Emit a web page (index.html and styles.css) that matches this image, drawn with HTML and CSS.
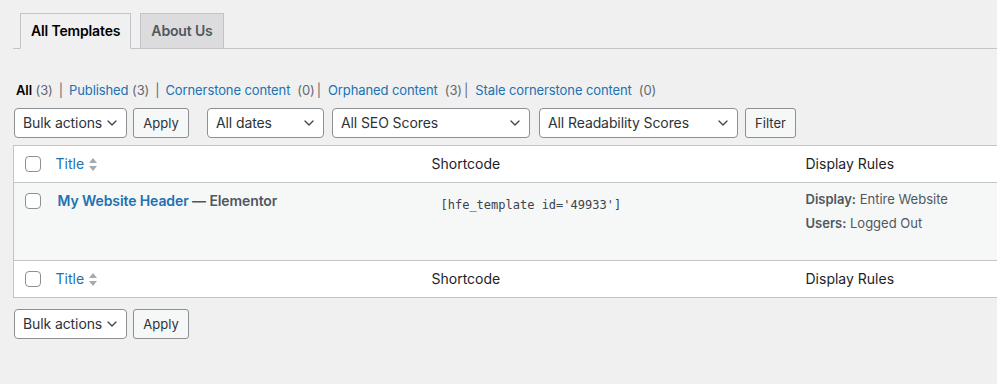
FILE: index.html
```html
<!DOCTYPE html>
<html lang="en">
<head>
<meta charset="utf-8">
<title>All Templates</title>
<link rel="stylesheet" href="styles.css">
</head>
<body>
<div class="wrap">
  <nav class="tabs">
    <a class="tab active" href="#">All Templates</a>
    <a class="tab" href="#">About Us</a>
  </nav>

  <ul class="subsubsub">
    <li><a class="current" href="#">All</a> <span class="count">(3)</span><span class="sep">|</span></li>
    <li><a href="#">Published</a> <span class="count">(3)</span><span class="sep">|</span></li>
    <li><a href="#">Cornerstone content</a><span class="count gap">(0)</span><span class="sep tight">|</span></li>
    <li><a href="#">Orphaned content</a><span class="count gap">(3)</span><span class="sep tight">|</span></li>
    <li><a href="#">Stale cornerstone content</a><span class="count gap">(0)</span></li>
  </ul>

  <div class="tablenav top">
    <div class="select w-bulk"><span>Bulk actions</span><svg viewBox="0 0 10 6" width="10" height="6"><path d="M1 1l4 4 4-4" /></svg></div>
    <button class="button w-apply">Apply</button>
    <div class="select w-dates ml-18"><span>All dates</span><svg viewBox="0 0 10 6" width="10" height="6"><path d="M1 1l4 4 4-4" /></svg></div>
    <div class="select w-seo ml-8"><span>All SEO Scores</span><svg viewBox="0 0 10 6" width="10" height="6"><path d="M1 1l4 4 4-4" /></svg></div>
    <div class="select w-read ml-9"><span>All Readability Scores</span><svg viewBox="0 0 10 6" width="10" height="6"><path d="M1 1l4 4 4-4" /></svg></div>
    <button class="button w-filter ml-7">Filter</button>
  </div>

  <table class="widefat">
    <colgroup>
      <col class="c-check">
      <col class="c-title">
      <col class="c-code">
      <col class="c-rules">
    </colgroup>
    <thead>
      <tr>
        <td class="check"><span class="cb"></span></td>
        <th><a class="sort" href="#">Title <svg class="arrows" viewBox="0 0 8 13" width="8" height="13"><path d="M4 0l4 5H0z"/><path d="M0 8h8l-4 5z"/></svg></a></th>
        <th>Shortcode</th>
        <th>Display Rules</th>
      </tr>
    </thead>
    <tbody>
      <tr class="odd">
        <td class="check"><span class="cb"></span></td>
        <td class="title-cell"><strong><a class="row-title" href="#">My Website Header</a> <span class="state">— Elementor</span></strong></td>
        <td class="code-cell"><code>[hfe_template id='49933']</code></td>
        <td class="rules-cell">
          <div class="rule"><b>Display:</b> Entire Website</div>
          <div class="rule"><b>Users:</b> Logged Out</div>
        </td>
      </tr>
    </tbody>
    <tfoot>
      <tr>
        <td class="check"><span class="cb"></span></td>
        <th><a class="sort" href="#">Title <svg class="arrows" viewBox="0 0 8 13" width="8" height="13"><path d="M4 0l4 5H0z"/><path d="M0 8h8l-4 5z"/></svg></a></th>
        <th>Shortcode</th>
        <th>Display Rules</th>
      </tr>
    </tfoot>
  </table>

  <div class="tablenav bottom">
    <div class="select w-bulk"><span>Bulk actions</span><svg viewBox="0 0 10 6" width="10" height="6"><path d="M1 1l4 4 4-4" /></svg></div>
    <button class="button w-apply">Apply</button>
  </div>
</div>
</body>
</html>
```

FILE: styles.css
```css
html, body {
  margin: 0;
  padding: 0;
  overflow: hidden;
}
body {
  background: #f0f0f1;
  color: #3c434a;
  font-family: Inter, "Noto Sans", "Liberation Sans", sans-serif;
  font-size: 13px;
  line-height: 1.4em;
}
a { text-decoration: none; color: #2271b1; }

.wrap {
  padding: 13px 0 0 13px;
  width: 1200px;
}

/* tabs */
.tabs {
  display: flex;
  border-bottom: 1px solid #c3c4c7;
  padding-left: 7px;
  gap: 9px;
  height: 35px;
  align-items: flex-end;
  width: 984px;
}
.tab {
  display: block;
  box-sizing: border-box;
  height: 36px;
  margin-bottom: -1px;
  padding: 0 10px;
  border: 1px solid #c3c4c7;
  background: #dcdcde;
  color: #50575e;
  font-size: 14px;
  font-weight: 600;
  line-height: 34px;
  letter-spacing: -0.15px;
}
.tab.active {
  background: #f0f0f1;
  color: #000;
  border-bottom-color: #f0f0f1;
}

/* status links */
.subsubsub {
  list-style: none;
  margin: 28px 0 0 3px;
  padding: 0;
  display: flex;
  font-size: 13px;
  line-height: 26px;
  color: #646970;
  height: 26px;
  letter-spacing: -0.1px;
}
.subsubsub li { white-space: pre; }
.subsubsub .current { color: #000; font-weight: 600; }
.subsubsub .sep { padding: 0 6px 0 6px; color: #646970; }
.subsubsub .sep.tight { padding: 0 7px 0 2px; }
.subsubsub .gap { margin-left: 7px; }

/* tablenav */
.tablenav {
  display: flex;
  align-items: center;
  height: 30px;
  gap: 6px;
}
.tablenav.top { margin: 5px 0 7px 1px; }
.tablenav.bottom { margin: 11px 0 0 1px; }
.ml-18 { margin-left: 12px; }
.ml-8 { margin-left: 2px; }
.ml-9 { margin-left: 3px; }
.ml-7 { margin-left: 1px; }

.select {
  box-sizing: border-box;
  height: 30px;
  display: flex;
  align-items: center;
  justify-content: space-between;
  padding: 0 9px 0 8px;
  border: 1px solid #8c8f94;
  border-radius: 4px;
  background: #fff;
  color: #2c3338;
  font-size: 14px;
  letter-spacing: -0.1px;
}
.select svg path {
  fill: none;
  stroke: #3c434a;
  stroke-width: 1.3;
  stroke-linecap: round;
  stroke-linejoin: round;
}
.w-bulk { width: 113px; }
.w-dates { width: 117px; }
.w-seo { width: 198px; }
.w-read { width: 199px; }
.w-apply { width: 56px; }
.w-filter { width: 51px; }

.button {
  box-sizing: border-box;
  height: 30px;
  padding: 0;
  border: 1px solid #8c8f94;
  border-radius: 3px;
  background: #f6f7f7;
  color: #2c3338;
  font-family: inherit;
  font-size: 13px;
  text-align: center;
  cursor: pointer;
}

/* table */
.widefat {
  border-collapse: collapse;
  border: 1px solid #c3c4c7;
  background: #fff;
  table-layout: fixed;
  width: 1170px;
}
.c-check { width: 32px; }
.c-title { width: 376px; }
.c-code { width: 374px; }
.widefat th,
.widefat td {
  text-align: left;
  vertical-align: top;
  padding: 8px 10px;
}
.widefat thead tr,
.widefat tfoot tr { height: 36px; }
.widefat thead th,
.widefat tfoot th {
  font-size: 14px;
  font-weight: 400;
  color: #1d2327;
  line-height: 20px;
  padding: 8px 10px;
}
.widefat thead tr { border-bottom: 1px solid #c3c4c7; }
.widefat tfoot tr { border-top: 1px solid #c3c4c7; }
.widefat td.check { padding: 10px 0 0 11px; }
.cb {
  display: block;
  box-sizing: border-box;
  width: 16px;
  height: 16px;
  border: 1px solid #8c8f94;
  border-radius: 4px;
  background: #fff;
}
.sort {
  display: inline-flex;
  align-items: center;
  gap: 5px;
  color: #2271b1;
}
.arrows path { fill: #a7aaad; }

tbody tr.odd { background: #f6f7f7; height: 78px; }
tbody td.check { padding-top: 11px; }
.title-cell { font-size: 14px; line-height: 20px; padding-top: 8px !important; }
.title-cell strong { font-weight: 600; padding-left: 2px; letter-spacing: -0.1px; }
.row-title { color: #2271b1; }
.state { color: #50575e; }
.code-cell { padding-top: 12px !important; }
.code-cell code {
  font-family: "DejaVu Sans Mono", monospace;
  font-size: 12px;
  color: #3c434a;
  padding-left: 9px;
}
.rules-cell { padding-top: 4px !important; color: #50575e; }
.rule { font-size: 13px; line-height: 24px; }
.rule b { font-weight: 600; }
```
